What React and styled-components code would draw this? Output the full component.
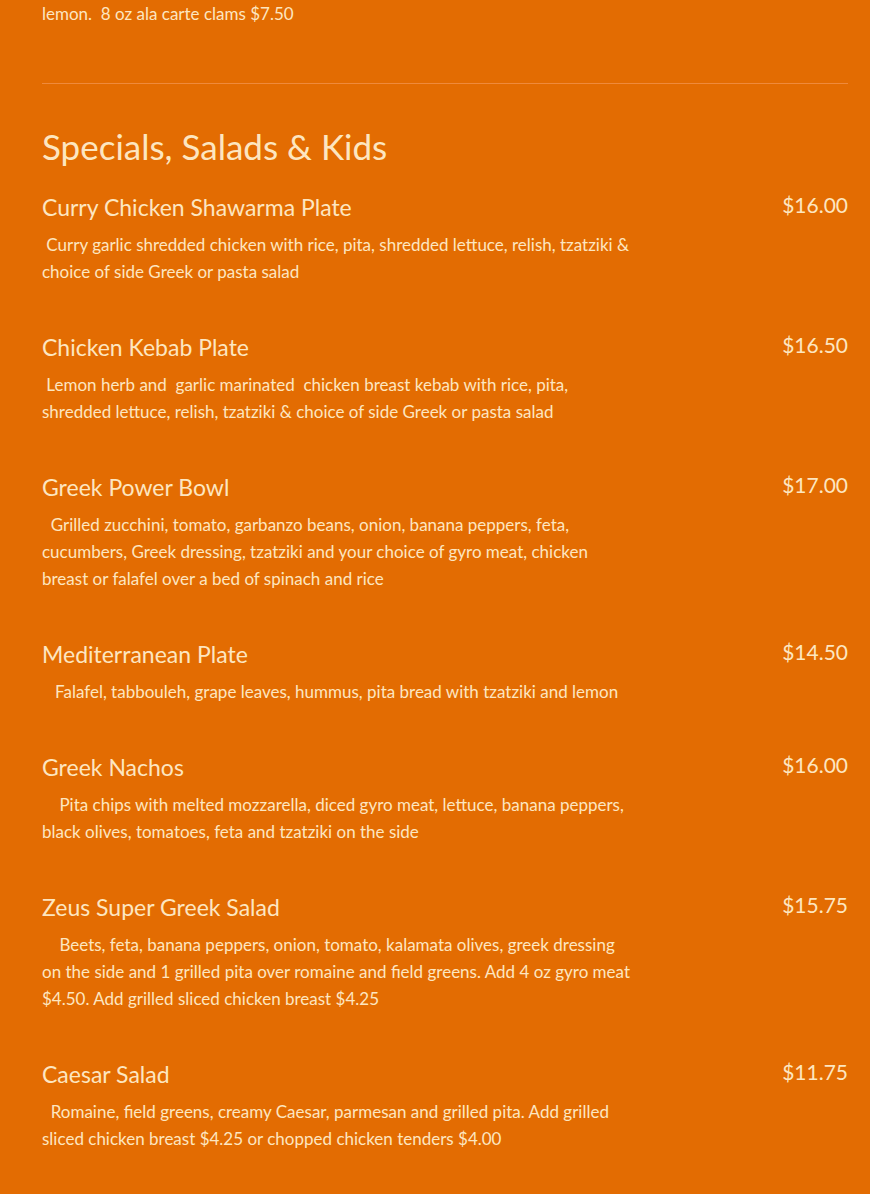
import React from 'react'
import styled, { createGlobalStyle } from 'styled-components';

const GlobalStyle = createGlobalStyle`
  body {
    margin: 0;
    background: #e36c02;
    font-family: Lato, "Liberation Sans", sans-serif;
    color: #fde6c0;
  }
`;

const items = [
    {
        name: 'Curry Chicken Shawarma Plate',
        price: '$16.00',
        text: '\u00a0Curry garlic shredded chicken with rice, pita, shredded lettuce, relish, tzatziki & choice of side Greek or pasta salad',
    },
    {
        name: 'Chicken Kebab Plate',
        price: '$16.50',
        text: '\u00a0Lemon herb and \u00a0garlic marinated \u00a0chicken breast kebab with rice, pita, shredded lettuce, relish, tzatziki & choice of side Greek or pasta salad',
    },
    {
        name: 'Greek Power Bowl',
        price: '$17.00',
        text: '\u00a0\u00a0Grilled zucchini, tomato, garbanzo beans, onion, banana peppers, feta, cucumbers, Greek dressing, tzatziki and your choice of gyro meat, chicken breast or falafel over a bed of spinach and rice',
    },
    {
        name: 'Mediterranean Plate',
        price: '$14.50',
        text: '\u00a0\u00a0\u00a0Falafel, tabbouleh, grape leaves, hummus, pita bread with tzatziki and lemon',
    },
    {
        name: 'Greek Nachos',
        price: '$16.00',
        text: '\u00a0\u00a0\u00a0\u00a0Pita chips with melted mozzarella, diced gyro meat, lettuce, banana peppers, black olives, tomatoes, feta and tzatziki on the side',
    },
    {
        name: 'Zeus Super Greek Salad',
        price: '$15.75',
        text: '\u00a0\u00a0\u00a0\u00a0Beets, feta, banana peppers, onion, tomato, kalamata olives, greek dressing on the side and 1 grilled pita over romaine and field greens. Add 4 oz gyro meat $4.50. Add grilled sliced chicken breast $4.25',
    },
    {
        name: 'Caesar Salad',
        price: '$11.75',
        text: '\u00a0\u00a0Romaine, field greens, creamy Caesar, parmesan and grilled pita. Add grilled sliced chicken breast $4.25 or chopped chicken tenders $4.00',
    },
];

function App() {
    return (
        <>
            <GlobalStyle />
            <Menu>
                <Desc>lemon. &nbsp;8 oz ala carte clams $7.50</Desc>
                <Divider />
                <Heading>Specials, Salads &amp; Kids</Heading>
                <List>
                    {items.map(({ name, price, text }) => (
                        <Item key={name}>
                            <div className="info">
                                <h3>{name}</h3>
                                <Desc>{text}</Desc>
                            </div>
                            <Price>{price}</Price>
                        </Item>
                    ))}
                </List>
            </Menu>
        </>
    )
}

export default App

const Menu = styled.main`
  padding: 0 22px 40px 42px;
`;

const Desc = styled.p`
  margin: 0;
  font-size: 17px;
  line-height: 27px;
`;

const Divider = styled.hr`
  margin: 56px 0 0;
  border: 0;
  height: 1px;
  background: #ef8a3c;
`;

const Heading = styled.h2`
  margin: 41px 0 0;
  font-size: 35px;
  font-weight: 400;
  line-height: 43px;
`;

const List = styled.div`
  display: flex;
  flex-direction: column;
  gap: 49px;
  margin-top: 26px;
`;

const Item = styled.div`
  display: flex;
  justify-content: space-between;
  align-items: flex-start;

.info{
    width: 592px;
}

h3{
    margin: 0 0 10px;
    font-size: 23px;
    font-weight: 400;
    line-height: 27px;
}
`;

const Price = styled.div`
  font-size: 21px;
  line-height: 27px;
  margin-top: -3px;
`;
